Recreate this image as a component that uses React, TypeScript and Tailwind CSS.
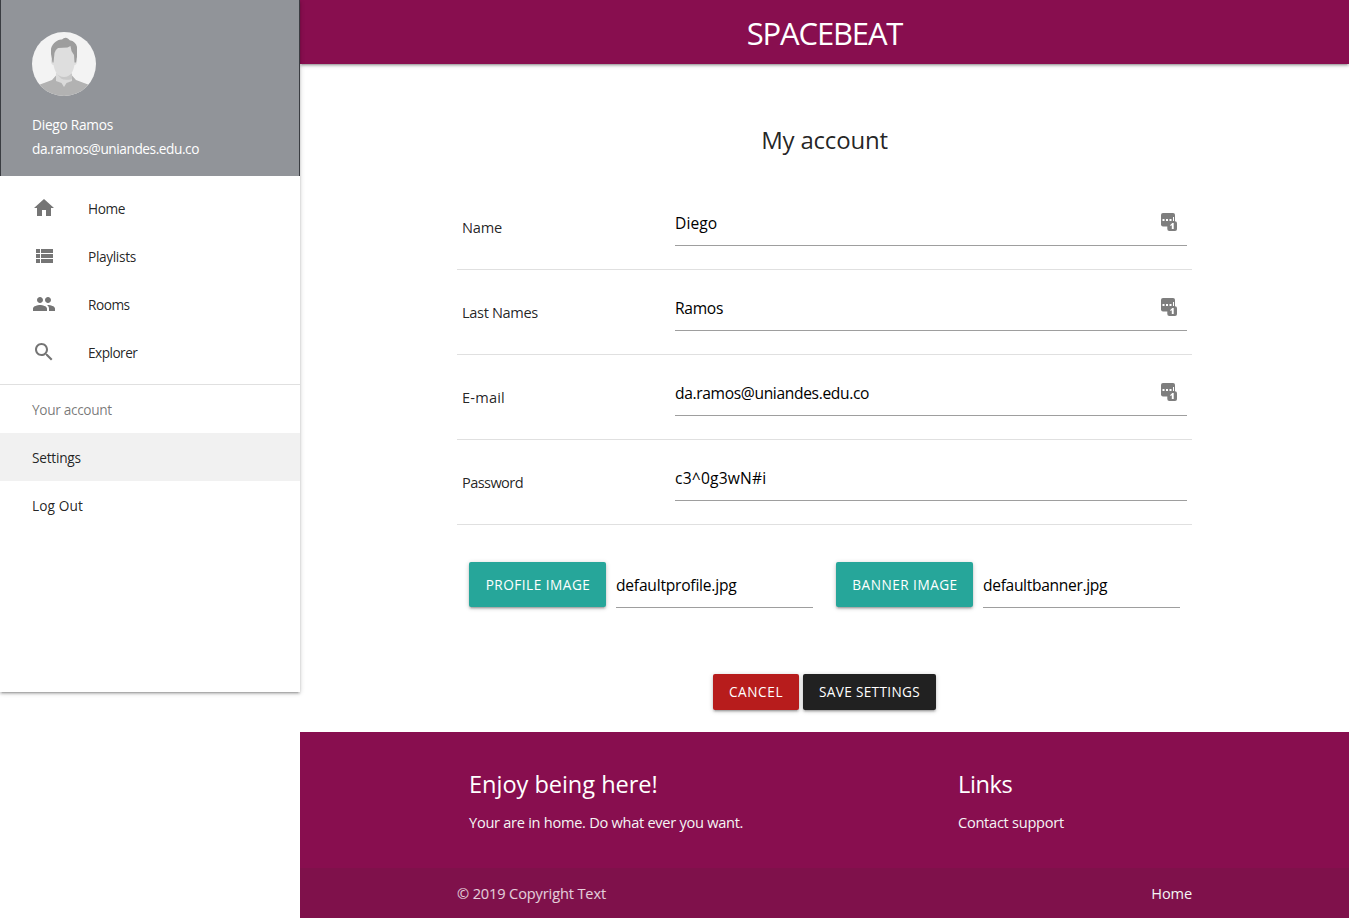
import React from "react";

const navItems = [
  { label: "Home", size: "tracking-[-0.45px]", d: "M10 20v-6h4v6h5v-8h3L12 3 2 12h3v8z" },
  {
    label: "Playlists",
    size: "tracking-[-0.35px]",
    d: "M4 14h4v-4H4v4zm0 5h4v-4H4v4zM4 9h4V5H4v4zm5 5h12v-4H9v4zm0 5h12v-4H9v4zM9 5v4h12V5H9z",
  },
  {
    label: "Rooms",
    size: "tracking-[-0.5px]",
    d: "M16 11c1.66 0 2.99-1.34 2.99-3S17.66 5 16 5s-3 1.34-3 3 1.34 3 3 3zm-8 0c1.66 0 2.99-1.34 2.99-3S9.66 5 8 5 5 6.34 5 8s1.34 3 3 3zm0 2c-2.33 0-7 1.17-7 3.5V19h14v-2.5c0-2.33-4.67-3.5-7-3.5zm8 0c-.29 0-.62.02-.97.05 1.16.84 1.97 1.97 1.97 3.45V19h6v-2.5c0-2.33-4.67-3.5-7-3.5z",
  },
  {
    label: "Explorer",
    size: "tracking-[-0.55px]",
    d: "M15.5 14h-.79l-.28-.27C15.41 12.59 16 11.11 16 9.5 16 5.91 13.09 3 9.5 3S3 5.91 3 9.5 5.91 16 9.5 16c1.61 0 3.09-.59 4.23-1.57l.27.28v.79l5 4.99L20.49 19l-4.99-5zm-6 0C7.01 14 5 11.99 5 9.5S7.01 5 9.5 5 14 7.01 14 9.5 11.99 14 9.5 14z",
  },
];

const fields = [
  { label: "Name", value: "Diego", badge: true, labelFit: "tracking-[-0.2px]", valueFit: "tracking-[0.1px]" },
  { label: "Last Names", value: "Ramos", badge: true, labelFit: "tracking-[-0.35px]", valueFit: "tracking-[-0.3px]" },
  {
    label: "E-mail",
    value: "da.ramos@uniandes.edu.co",
    badge: true,
    labelFit: "tracking-[0.2px]",
    valueFit: "tracking-[-0.35px]",
  },
  { label: "Password", value: "c3^0g3wN#i", badge: false, labelFit: "tracking-[-0.6px]", valueFit: "tracking-[0.2px]" },
];

const shadow =
  "shadow-[0_2px_2px_0_rgba(0,0,0,0.14),0_3px_1px_-2px_rgba(0,0,0,0.12),0_1px_5px_0_rgba(0,0,0,0.2)]";

function Avatar() {
  return (
    <svg className="block h-16 w-16" viewBox="0 0 64 64">
      <defs>
        <clipPath id="avatar-clip">
          <circle cx="32" cy="32" r="32" />
        </clipPath>
      </defs>
      <g clipPath="url(#avatar-clip)">
        <rect width="64" height="64" fill="#f3f3f3" />
        <path d="M0 64V55L8 52.5 20 48 24 43.5h16L44 48l12 4.5 8 2.5V64z" fill="#b2b2b2" />
        <path d="M24 41v8l5.500 2 2.500 4 2.500-4 5.500-2V41z" fill="#dadada" />
        <path d="M26 43l3 3.500q3 2 10 1l1-1V42z" fill="#c8c8c8" />
        <path d="M20 27q-1.500 0-1 3 .5 3 2.500 3 1.500 8 5.500 10.500 5 3 10 0 4-2.500 5.500-10.500 2 0 2.500-3 .5-3-1-3L42 14H22z" fill="#dedede" />
        <path
          d="M21.500 30.500h-1L19 22V17q1-5 5-7.500 3-2.500 6-2 3-3 6.500-.5.5 1.500 4 2 5 3 4.500 8v8l-1 5.500h-1.500l-.5-7.500-2.500-4-1-5-3 1.500-9.500.5q-3 2-3.500 5z"
          fill="#9d9d9d"
        />
      </g>
    </svg>
  );
}

function KeyBadge() {
  return (
    <svg className="block h-[18px] w-[16px]" viewBox="0 0 16 18">
      <rect width="14" height="13.500" rx="2" fill="#7e7e7e" />
      <path d="M1.500 6h2v2h-2zM5 6h2v2H5zM8.500 6h2v2h-2zM12 4h1v4h-1z" fill="#fff" />
      <rect x="6.300" y="8.300" width="9.700" height="9.700" rx="2" fill="#7e7e7e" />
      <path d="M9.300 12L11.300 10H12.700v6h-1.900v-3.800l-1.500.9z" fill="#fff" />
    </svg>
  );
}

function Sidebar() {
  return (
    <aside className={`relative z-10 h-[692px] w-[300px] shrink-0 bg-white text-[13.7px] ${shadow}`}>
      <div className="h-44 border-x border-[#3a3d42] bg-[#919499] pl-[31px] pt-8 text-white">
        <Avatar />
        <div className="mt-[17px] flex h-6 items-center tracking-[-0.25px]">
          <span>Diego Ramos</span>
        </div>
        <div className="flex h-6 items-center tracking-[-0.45px]">
          <span>da.ramos@uniandes.edu.co</span>
        </div>
      </div>
      <nav className="pt-2 text-black/87">
        {navItems.map((item) => (
          <div key={item.label} className="flex h-12 items-center pl-8">
            <svg className="mr-8 h-6 w-6" viewBox="0 0 24 24" fill="#757575">
              <path d={item.d} />
            </svg>
            <span className={`pt-0.5 ${item.size}`}>{item.label}</span>
          </div>
        ))}
        <div className="mt-2 h-px bg-[#e0e0e0]" />
        <div className="flex h-12 items-center pl-8 pt-0.5 tracking-[-0.35px] text-black/54">
          <span>Your account</span>
        </div>
        <div className="flex h-12 items-center bg-[#f1f1f1] pl-8 pt-0.5 tracking-[-0.25px]">
          <span>Settings</span>
        </div>
        <div className="flex h-12 items-center pl-8 pt-0.5 tracking-[0.1px]">
          <span>Log Out</span>
        </div>
      </nav>
    </aside>
  );
}

function FilePicker({ button, file, fit }: { button: string; file: string; fit: string }) {
  return (
    <div className="flex w-[344px] gap-2.5">
      <button
        className={`h-[45px] w-[137px] shrink-0 rounded-[2px] bg-[#26a69a] pl-px pt-0.5 text-[13.6px] tracking-[0.5px] text-white ${shadow}`}
      >
        {button}
      </button>
      <div className="flex h-[46px] w-[197px] items-center border-b border-[#9e9e9e] pt-0.5 text-[15.6px] text-black">
        <span className={fit}>{file}</span>
      </div>
    </div>
  );
}

export default function App() {
  return (
    <div className="flex h-[918px] w-[1349px] overflow-hidden whitespace-nowrap bg-white font-['Open_Sans','Noto_Sans',sans-serif]">
      <Sidebar />
      <div className="flex w-[1049px] flex-col">
        <header className={`flex h-16 shrink-0 items-center justify-center bg-[#880e4f] pt-[3px] text-white ${shadow}`}>
          <span className="text-[31px] tracking-[-1.15px]">SPACEBEAT</span>
        </header>
        <main className="flex h-[668px] shrink-0 flex-col items-center text-black/87">
          <h1 className="mt-[58px] flex h-9 items-center text-[24px] tracking-[-0.2px]">
            <span>My account</span>
          </h1>
          <div className="mt-[27px] w-[735px]">
            {fields.map((field) => (
              <div key={field.label} className="flex h-[85px] border-b border-[#e0e0e0] px-[5px]">
                <div className="flex h-[85px] w-[213px] items-center text-[14.6px]">
                  <span className={field.labelFit}>{field.label}</span>
                </div>
                <div className="mt-[15px] flex h-[46px] w-[512px] items-center justify-between border-b border-[#9e9e9e] pr-[10px] pt-px text-[15.6px] text-black">
                  <span className={`pt-0.5 ${field.valueFit}`}>{field.value}</span>
                  {field.badge && (
                    <div className="pb-0.5">
                      <KeyBadge />
                    </div>
                  )}
                </div>
              </div>
            ))}
          </div>
          <div className="mt-[37px] flex w-[735px] gap-[23px] pl-3">
            <FilePicker button="PROFILE IMAGE" file="defaultprofile.jpg" fit="tracking-[-0.22px]" />
            <FilePicker button="BANNER IMAGE" file="defaultbanner.jpg" fit="tracking-[-0.33px]" />
          </div>
          <div className="mt-[66px] flex gap-1 text-[13.6px] text-white">
            <button className={`h-9 w-[86px] rounded-[2px] bg-[#b71c1c] tracking-[0.6px] ${shadow}`}>
              CANCEL
            </button>
            <button className={`h-9 w-[133px] rounded-[2px] bg-[#212121] tracking-[0.35px] ${shadow}`}>
              SAVE SETTINGS
            </button>
          </div>
        </main>
        <footer className="flex h-[186px] flex-col bg-[#880e4f] text-white">
          <div className="flex h-[136px] pl-[169px] pt-[35px]">
            <div className="w-[489px]">
              <h2 className="flex h-9 items-center text-[23.6px] tracking-[-0.05px]">
                <span>Enjoy being here!</span>
              </h2>
              <p className="mt-[9px] flex h-[22px] items-center text-[14.6px] tracking-[-0.28px] text-[#f5f5f5]">
                <span>Your are in home. Do what ever you want.</span>
              </p>
            </div>
            <div>
              <h2 className="flex h-9 items-center text-[23.6px] tracking-[-0.4px]">
                <span>Links</span>
              </h2>
              <p className="mt-[9px] flex h-[22px] items-center text-[14.6px] tracking-[-0.27px] text-[#f5f5f5]">
                <span>Contact support</span>
              </p>
            </div>
          </div>
          <div className="flex h-[50px] items-center justify-between bg-[#333333]/10 px-[157px] pt-0.5 text-[14.6px] tracking-[-0.14px]">
            <span className="text-white/80">© 2019 Copyright Text</span>
            <span className="text-[#f5f5f5]">Home</span>
          </div>
        </footer>
      </div>
    </div>
  );
}
